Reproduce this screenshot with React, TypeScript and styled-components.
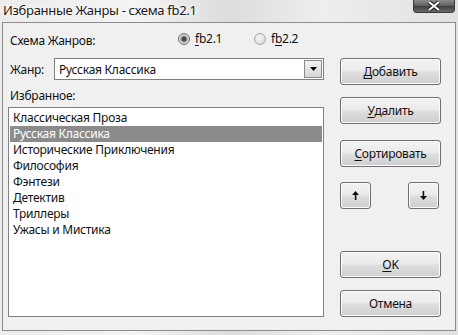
import React from "react";
import styled, { createGlobalStyle } from "styled-components";

const GlobalStyle = createGlobalStyle`
  html, body {
    margin: 0;
    padding: 0;
    background: #e4e4e4;
  }
  body {
    font-family: "Noto Sans", "Liberation Sans", sans-serif;
    font-size: 12px;
    letter-spacing: -0.25px;
    color: #111;
  }
`;

const genres = [
  "Классическая Проза",
  "Русская Классика",
  "Исторические Приключения",
  "Философия",
  "Фэнтези",
  "Детектив",
  "Триллеры",
  "Ужасы и Мистика",
];

function ArrowIcon({ down }: { down?: boolean }) {
  return (
    <svg width="7" height="9" viewBox="0 0 7 9">
      <g transform={down ? "rotate(180 3.5 4.5)" : undefined}>
        <path d="M3.5 0 L7 4 L0 4 Z" fill="#111" />
        <rect x="2.8" y="3.5" width="1.6" height="5.5" fill="#111" />
      </g>
    </svg>
  );
}

function App() {
  const selected = 1;

  return (
    <Window>
      <GlobalStyle />
      <TitleBar>
        <Title>Избранные Жанры - схема fb2.1</Title>
        <CloseButton>
          <svg width="14" height="10" viewBox="0 0 14 10">
            <path d="M2 1 L12 9 M12 1 L2 9" stroke="#222" strokeWidth="4" />
            <path d="M2 1 L12 9 M12 1 L2 9" stroke="#fff" strokeWidth="2" />
          </svg>
        </CloseButton>
      </TitleBar>
      <Client>
        <SchemeRow>
          <Label>Схема Жанров:</Label>
          <RadioOption $left={170}>
            <Radio $checked />
            <span>
              <u>f</u>b2.1
            </span>
          </RadioOption>
          <RadioOption $left={246}>
            <Radio />
            <span>
              f<u>b</u>2.2
            </span>
          </RadioOption>
        </SchemeRow>
        <Body>
          <LeftColumn>
            <GenreRow>
              <Label>Жанр:</Label>
              <Combo>
                <ComboText>Русская Классика</ComboText>
                <ComboArrow>
                  <svg width="7" height="4" viewBox="0 0 7 4">
                    <path d="M0 0 H7 L3.5 4 Z" fill="#000" />
                  </svg>
                </ComboArrow>
              </Combo>
            </GenreRow>
            <FavLabel>Избранное:</FavLabel>
            <ListBox>
              {genres.map((g, i) => (
                <ListItem key={g} $selected={i === selected}>
                  {g}
                </ListItem>
              ))}
            </ListBox>
          </LeftColumn>
          <RightColumn>
            <Button>
              <u>Д</u>обавить
            </Button>
            <Button $mt={12}>
              <u>У</u>далить
            </Button>
            <Button $mt={16}>
              <u>С</u>ортировать
            </Button>
            <ArrowRow>
              <SmallButton>
                <ArrowIcon />
              </SmallButton>
              <SmallButton>
                <ArrowIcon down />
              </SmallButton>
            </ArrowRow>
            <Button $mt={42}>
              <u>O</u>K
            </Button>
            <Button $mt={12}>Отмена</Button>
          </RightColumn>
        </Body>
      </Client>
    </Window>
  );
}

const Window = styled.div`
  width: 458px;
  height: 335px;
  box-sizing: border-box;
  display: flex;
  flex-direction: column;
  background: linear-gradient(
    90deg,
    #ececec 0%,
    #f4f4f4 30%,
    #dcdcdc 50%,
    #eeeeee 70%,
    #e2e2e2 100%
  );
  overflow: hidden;
`;

const TitleBar = styled.div`
  height: 22px;
  display: flex;
  align-items: flex-start;
  justify-content: space-between;
  padding: 0 3px 0 3px;
`;

const Title = styled.div`
  font-size: 13px;
  letter-spacing: -0.3px;
  line-height: 21px;
  color: #1a1a1a;
  text-shadow: 0 0 6px #fff, 0 0 3px #fff;
`;

const CloseButton = styled.div`
  width: 42px;
  height: 13px;
  box-sizing: border-box;
  border: 1px solid #3a3a3a;
  border-top: none;
  border-radius: 0 0 4px 4px;
  background: linear-gradient(#8a8a8a 0%, #5e5e5e 50%, #3e3e3e 51%, #6a6a6a 100%);
  display: flex;
  align-items: center;
  justify-content: center;
`;

const Client = styled.div`
  margin: 0 2px 4px 2px;
  flex: 1;
  box-sizing: border-box;
  border: 1px solid #8c8c8c;
  background: #f0f0f0;
  display: flex;
  flex-direction: column;
  padding: 0 0 12px 5px;
`;

const SchemeRow = styled.div`
  position: relative;
  height: 35px;
  display: flex;
  align-items: center;
  padding: 0 0 0 2px;
  box-sizing: border-box;
`;

const Label = styled.span`
  white-space: nowrap;
`;

const RadioOption = styled.label<{ $left: number }>`
  position: absolute;
  left: ${(p) => p.$left}px;
  top: 8px;
  display: flex;
  align-items: center;
  gap: 5px;
  line-height: 16px;
  u {
    text-decoration-thickness: 1px;
    text-underline-offset: 2px;
  }
`;

const Radio = styled.span<{ $checked?: boolean }>`
  width: 12px;
  height: 12px;
  box-sizing: border-box;
  border-radius: 50%;
  border: 1px solid ${(p) => (p.$checked ? "#6e6e6e" : "#a8a8a8")};
  background: ${(p) =>
    p.$checked
      ? "radial-gradient(circle at 50% 50%, #3a3a3a 0, #555 2px, #9a9a9a 3px, #d8d8d8 4px, #eaeaea 6px)"
      : "radial-gradient(circle at 40% 40%, #f6f6f6 0, #dcdcdc 6px)"};
`;

const Body = styled.div`
  display: flex;
  align-items: flex-start;
  flex: 1;
`;

const LeftColumn = styled.div`
  width: 316px;
  display: flex;
  flex-direction: column;
`;

const GenreRow = styled.div`
  display: flex;
  align-items: center;
  height: 22px;
  padding-left: 2px;
  gap: 10px;
`;

const Combo = styled.div`
  margin-left: auto;
  width: 271px;
  height: 22px;
  box-sizing: border-box;
  border: 1px solid #7f7f7f;
  background: #fff;
  display: flex;
  align-items: center;
  padding: 1px;
`;

const ComboText = styled.span`
  flex: 1;
  padding-left: 3px;
`;

const ComboArrow = styled.div`
  width: 18px;
  height: 18px;
  box-sizing: border-box;
  border: 1px solid #8a8a8a;
  background: linear-gradient(#f2f2f2, #d6d6d6);
  display: flex;
  align-items: center;
  justify-content: center;
`;

const FavLabel = styled.div`
  padding: 3px 0 0 2px;
  height: 22px;
  line-height: 16px;
  box-sizing: border-box;
  margin-top: 5px;
`;

const ListBox = styled.div`
  height: 210px;
  box-sizing: border-box;
  border: 1px solid #828282;
  background: #fff;
  padding: 2px 1px;
`;

const ListItem = styled.div<{ $selected?: boolean }>`
  height: 16px;
  line-height: 16px;
  padding-left: 3px;
  white-space: nowrap;
  background: ${(p) => (p.$selected ? "#8b8b8b" : "transparent")};
  color: ${(p) => (p.$selected ? "#fff" : "#111")};
`;

const RightColumn = styled.div`
  margin-left: 16px;
  width: 101px;
  display: flex;
  flex-direction: column;
`;

const buttonFace = `
  box-sizing: border-box;
  border: 1px solid #707070;
  border-radius: 3px;
  background: linear-gradient(#f3f3f3 0%, #ebebeb 45%, #dddddd 55%, #cfcfcf 100%);
  box-shadow: inset 0 0 0 1px #fbfbfb;
  display: flex;
  align-items: center;
  justify-content: center;
  color: #111;
`;

const Button = styled.div<{ $mt?: number }>`
  ${buttonFace}
  height: 27px;
  margin-top: ${(p) => p.$mt ?? 0}px;
  font-size: 12px;
  u {
    text-decoration-thickness: 1px;
    text-underline-offset: 2px;
  }
`;

const ArrowRow = styled.div`
  margin-top: 15px;
  display: flex;
  justify-content: space-between;
  padding-right: 2px;
`;

const SmallButton = styled.div`
  ${buttonFace}
  width: 31px;
  height: 27px;
`;

export default App;
